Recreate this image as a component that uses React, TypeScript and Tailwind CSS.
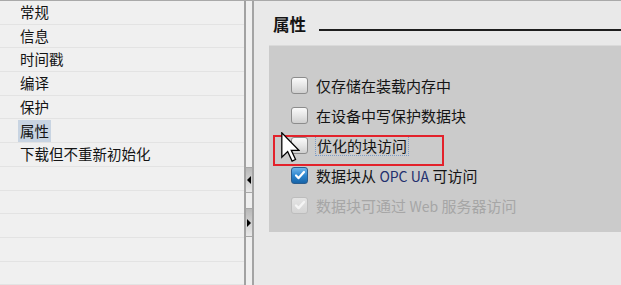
import React from "react";

const items = ["常规", "信息", "时间戳", "编译", "保护", "属性", "下载但不重新初始化", "", "", "", "", ""];

function Box({ state }: { state: "off" | "on" | "disabled" }) {
  if (state === "on") {
    return (
      <span className="flex h-[17px] w-[17px] shrink-0 items-center justify-center rounded-[3px] border border-[#2a5d8f] bg-gradient-to-b from-[#6fb6ea] via-[#2b86cf] to-[#1864a8]">
        <svg viewBox="0 0 12 12" className="h-[12px] w-[12px]">
          <path d="M2 6.5l2.6 2.6L10 3" fill="none" stroke="white" strokeWidth={2.2} strokeLinecap="round" strokeLinejoin="round" />
        </svg>
      </span>
    );
  }
  if (state === "disabled") {
    return (
      <span className="flex h-[17px] w-[17px] shrink-0 items-center justify-center rounded-[3px] border border-[#bdbdbd] bg-gradient-to-b from-[#e4e4e4] to-[#d4d4d4]">
        <svg viewBox="0 0 12 12" className="h-[12px] w-[12px]">
          <path d="M2 6.5l2.6 2.6L10 3" fill="none" stroke="#f4f4f4" strokeWidth={2.4} strokeLinecap="round" strokeLinejoin="round" />
        </svg>
      </span>
    );
  }
  return (
    <span className="h-[17px] w-[17px] shrink-0 rounded-[3px] border border-[#8c8c8c] bg-gradient-to-b from-[#fafafa] via-[#e6e6e6] to-[#cfcfcf]" />
  );
}

export default function App() {
  return (
    <div
      className="relative flex h-[285px] w-[621px] overflow-hidden border-t border-[#a9a9a9] bg-[#e9e9e9]"
      style={{ fontFamily: '"Noto Sans CJK SC", "Noto Sans", sans-serif' }}
    >
      {/* tree list */}
      <div className="flex w-[244px] shrink-0 flex-col bg-[#f0f0f0]">
        {items.map((t, i) => (
          <div key={i} className="flex h-[23.7px] shrink-0 items-center border-b border-[#e3e3e3] pl-[18px] text-[14.5px] leading-none text-[#141414]">
            {t && (
              <span className={`flex h-[22px] items-center px-[2px] ${t === "属性" ? "bg-[#c8d4e2]" : ""}`}>{t}</span>
            )}
          </div>
        ))}
      </div>

      {/* splitter */}
      <div className="flex w-[10px] shrink-0 border-l-2 border-[#a2a2a2] bg-[#e2e2e2]">
        <div className="flex w-[6px] flex-col bg-[#efefef]">
          <div className="h-[166px]" />
          <div className="flex h-[26px] items-center justify-center border-y border-[#a8a8a8] bg-gradient-to-b from-[#b8b8b8] to-[#e8e8e8]">
            <span className="h-0 w-0 border-y-[4px] border-r-[4px] border-y-transparent border-r-black" />
          </div>
          <div className="h-[15px]" />
          <div className="flex h-[29px] items-center justify-center border-y border-[#a8a8a8] bg-gradient-to-b from-[#b8b8b8] to-[#e8e8e8]">
            <span className="h-0 w-0 border-y-[4px] border-l-[4px] border-y-transparent border-l-black" />
          </div>
        </div>
        <div className="w-[2px] bg-[#a4a4a4]" />
      </div>

      {/* properties */}
      <div className="flex min-w-0 flex-1 flex-col pl-[15px]">
        <div className="flex h-[44px] items-center gap-[13px] pl-[4px] pt-[2px]">
          <span className="text-[16.5px] font-bold leading-none text-[#141414]">属性</span>
          <div className="mt-[12px] h-[2px] flex-1 bg-[#1e1e1e]" />
        </div>
        <div className="relative flex flex-col border-t border-[#dadada] bg-[#cbcbcb] pb-[12px] pl-[22px] pt-[24px] text-[15px] leading-none">
          <div className="flex h-[30px] items-center gap-[8px] text-[#141414]">
            <Box state="off" />
            <span>仅存储在装载内存中</span>
          </div>
          <div className="flex h-[30px] items-center gap-[8px] text-[#141414]">
            <Box state="off" />
            <span>在设备中写保护数据块</span>
          </div>
          <div className="flex h-[30px] items-center gap-[7px] text-[#141414]">
            <Box state="off" />
            <span className="border border-dotted border-[#7d9cc8] px-[1px] py-[2px]">优化的块访问</span>
          </div>
          <div className="flex h-[30px] items-center gap-[8px] text-[#141414]">
            <Box state="on" />
            <span>
              数据块从 <span className="text-[14px] text-[#23306e]">OPC UA</span> 可访问
            </span>
          </div>
          <div className="flex h-[30px] items-center gap-[8px] text-[#a6a6a6]">
            <Box state="disabled" />
            <span>
              数据块可通过 <span className="text-[14px]">Web</span> 服务器访问
            </span>
          </div>

          {/* annotation */}
          <div className="absolute left-[4px] top-[89px] h-[31px] w-[171px] border-2 border-[#e3222b]" />
          <svg className="absolute left-[12px] top-[86px] h-[30px] w-[19px]" viewBox="0 0 12 19">
            <path d="M0.5 0.5 L0.5 16 L4.2 12.4 L7 18.4 L9.2 17.4 L6.5 11.6 L11.3 11.6 Z" fill="white" stroke="black" strokeWidth={0.8} strokeLinejoin="miter" />
          </svg>
        </div>
      </div>
    </div>
  );
}
